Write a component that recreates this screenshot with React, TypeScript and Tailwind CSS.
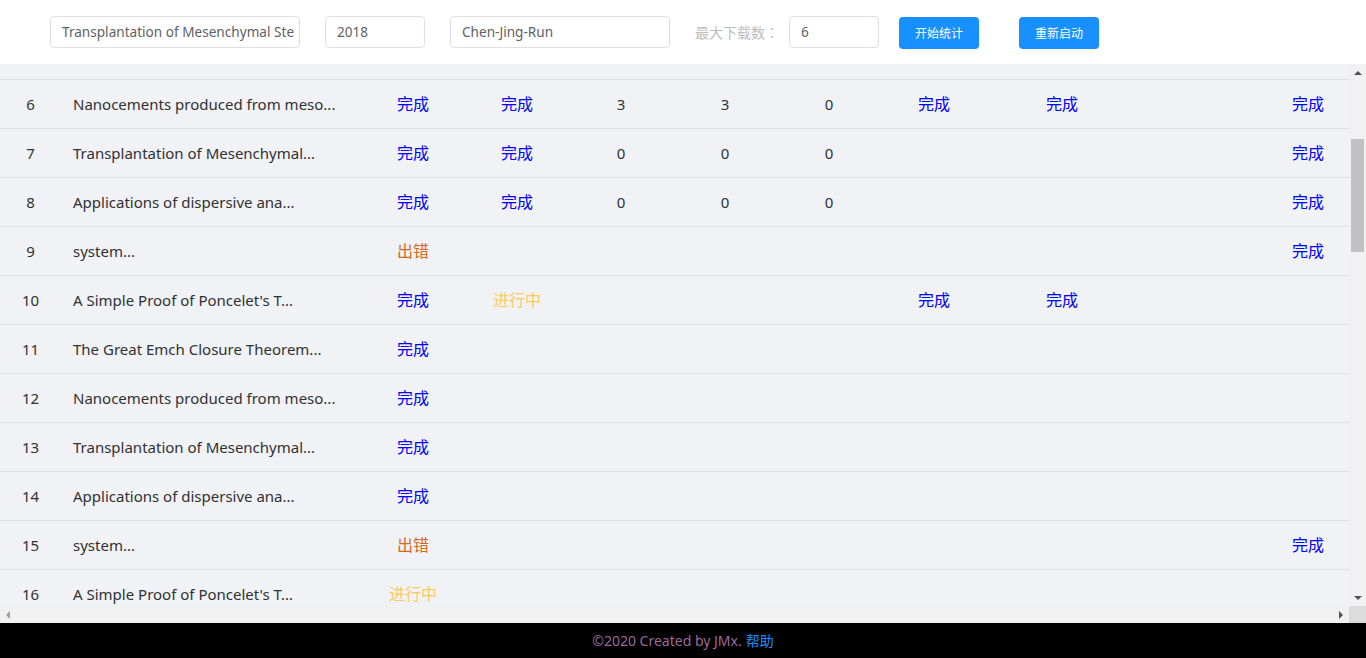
import React from "react";

type Cell = { t: string; c: "ok" | "err" | "run" | "n" } | null;

const ok: Cell = { t: "完成", c: "ok" };
const err: Cell = { t: "出错", c: "err" };
const run: Cell = { t: "进行中", c: "run" };
const n = (t: string): Cell => ({ t, c: "n" });

const rows: { id: number; title: string; cells: Cell[] }[] = [
  { id: 6, title: "Nanocements produced from meso...", cells: [ok, ok, n("3"), n("3"), n("0"), ok, ok, null, ok] },
  { id: 7, title: "Transplantation of Mesenchymal...", cells: [ok, ok, n("0"), n("0"), n("0"), null, null, null, ok] },
  { id: 8, title: "Applications of dispersive ana...", cells: [ok, ok, n("0"), n("0"), n("0"), null, null, null, ok] },
  { id: 9, title: "system...", cells: [err, null, null, null, null, null, null, null, ok] },
  { id: 10, title: "A Simple Proof of Poncelet's T...", cells: [ok, run, null, null, null, ok, ok, null, null] },
  { id: 11, title: "The Great Emch Closure Theorem...", cells: [ok, null, null, null, null, null, null, null, null] },
  { id: 12, title: "Nanocements produced from meso...", cells: [ok, null, null, null, null, null, null, null, null] },
  { id: 13, title: "Transplantation of Mesenchymal...", cells: [ok, null, null, null, null, null, null, null, null] },
  { id: 14, title: "Applications of dispersive ana...", cells: [ok, null, null, null, null, null, null, null, null] },
  { id: 15, title: "system...", cells: [err, null, null, null, null, null, null, null, ok] },
  { id: 16, title: "A Simple Proof of Poncelet's T...", cells: [run, null, null, null, null, null, null, null, null] },
];

const colorOf = (c: string) =>
  c === "ok"
    ? "text-[#0000ff] text-[16px]"
    : c === "err"
    ? "text-[#d2691e] text-[16px]"
    : c === "run"
    ? "text-[#fbcb62] text-[16px]"
    : "text-[#303133]";

const font = { fontFamily: '"Noto Sans", "Noto Sans CJK SC", sans-serif' };
const cjk = { fontFamily: '"Noto Sans CJK SC", sans-serif' };
const cjkTc = { fontFamily: '"Noto Sans CJK TC", "Noto Sans CJK SC", sans-serif' };

function Input({ value, w }: { value: string; w: string }) {
  return (
    <div
      className={`${w} h-[32px] border border-[#dcdfe6] rounded-[4px] bg-white flex items-center pl-[11px] overflow-hidden whitespace-nowrap text-[13.6px] text-[#606266]`}
    >
      {value}
    </div>
  );
}

export default function App() {
  return (
    <div className="w-[1366px] h-[658px] flex flex-col overflow-hidden" style={font}>
      {/* Header */}
      <div className="h-[64px] bg-white flex items-center pl-[50px] shrink-0">
        <Input value="Transplantation of Mesenchymal Ste" w="w-[250px]" />
        <div className="w-[25px]" />
        <Input value="2018" w="w-[100px]" />
        <div className="w-[25px]" />
        <Input value="Chen-Jing-Run" w="w-[220px]" />
        <div className="w-[25px]" />
        <span className="text-[14px] text-[#bdbdbd] w-[94px] whitespace-nowrap" style={cjkTc}>最大下载数：</span>
        <Input value="6" w="w-[90px]" />
        <div className="w-[20px]" />
        <button className="w-[80px] h-[32px] rounded-[4px] bg-[#1890ff] text-white text-[12px] mt-[2px]" style={cjk}>开始统计</button>
        <div className="w-[40px]" />
        <button className="w-[80px] h-[32px] rounded-[4px] bg-[#1890ff] text-white text-[12px] mt-[2px]" style={cjk}>重新启动</button>
      </div>

      {/* Main */}
      <div className="h-[559px] flex flex-col bg-[#f0f2f5] shrink-0">
        <div className="flex h-[542px]">
          <div className="w-[1349px] h-[542px] overflow-hidden">
            <div className="h-[15px]" />
            {rows.map((r) => (
              <div
                key={r.id}
                className="grid grid-cols-[61px_300px_104px_104px_104px_104px_104px_106px_150px_130px_82px] h-[49px] border-t border-[#dfe1e6] items-center text-[15px]"
              >
                <div className="text-center text-[#303133]">{r.id}</div>
                <div className="pl-[12px] text-[#303133] whitespace-nowrap">{r.title}</div>
                {r.cells.map((c, i) => (
                  <div key={i} className={`text-center ${c ? colorOf(c.c) : ""}`}>
                    {c ? c.t : ""}
                  </div>
                ))}
              </div>
            ))}
          </div>
          {/* vertical scrollbar */}
          <div className="w-[17px] h-[542px] bg-[#f1f1f1] flex flex-col items-center">
            <div className="h-[17px] w-full flex items-center justify-center">
              <div className="w-0 h-0 border-l-[4px] border-r-[4px] border-b-[4px] border-l-transparent border-r-transparent border-b-[#505050]" />
            </div>
            <div className="h-[58px]" />
            <div className="w-[13px] h-[113px] bg-[#c1c1c1]" />
            <div className="flex-1" />
            <div className="h-[17px] w-full flex items-center justify-center">
              <div className="w-0 h-0 border-l-[4px] border-r-[4px] border-t-[4px] border-l-transparent border-r-transparent border-t-[#505050]" />
            </div>
          </div>
        </div>
        {/* horizontal scrollbar */}
        <div className="flex h-[17px]">
          <div className="w-[1349px] h-[17px] bg-[#f1f1f1] flex items-center justify-between px-[6px]">
            <div className="w-0 h-0 border-t-[4px] border-b-[4px] border-r-[4px] border-t-transparent border-b-transparent border-r-[#a0a0a0]" />
            <div className="w-0 h-0 border-t-[4px] border-b-[4px] border-l-[4px] border-t-transparent border-b-transparent border-l-[#505050]" />
          </div>
          <div className="w-[17px] h-[17px] bg-[#dcdcdc]" />
        </div>
      </div>

      {/* Footer */}
      <div className="h-[35px] bg-black flex items-center justify-center text-[14px] shrink-0">
        <span className="text-[#9a6a9a]">©2020 Created by JMx.</span>
        <span className="text-[#1890ff] ml-[4px]">帮助</span>
      </div>
    </div>
  );
}
